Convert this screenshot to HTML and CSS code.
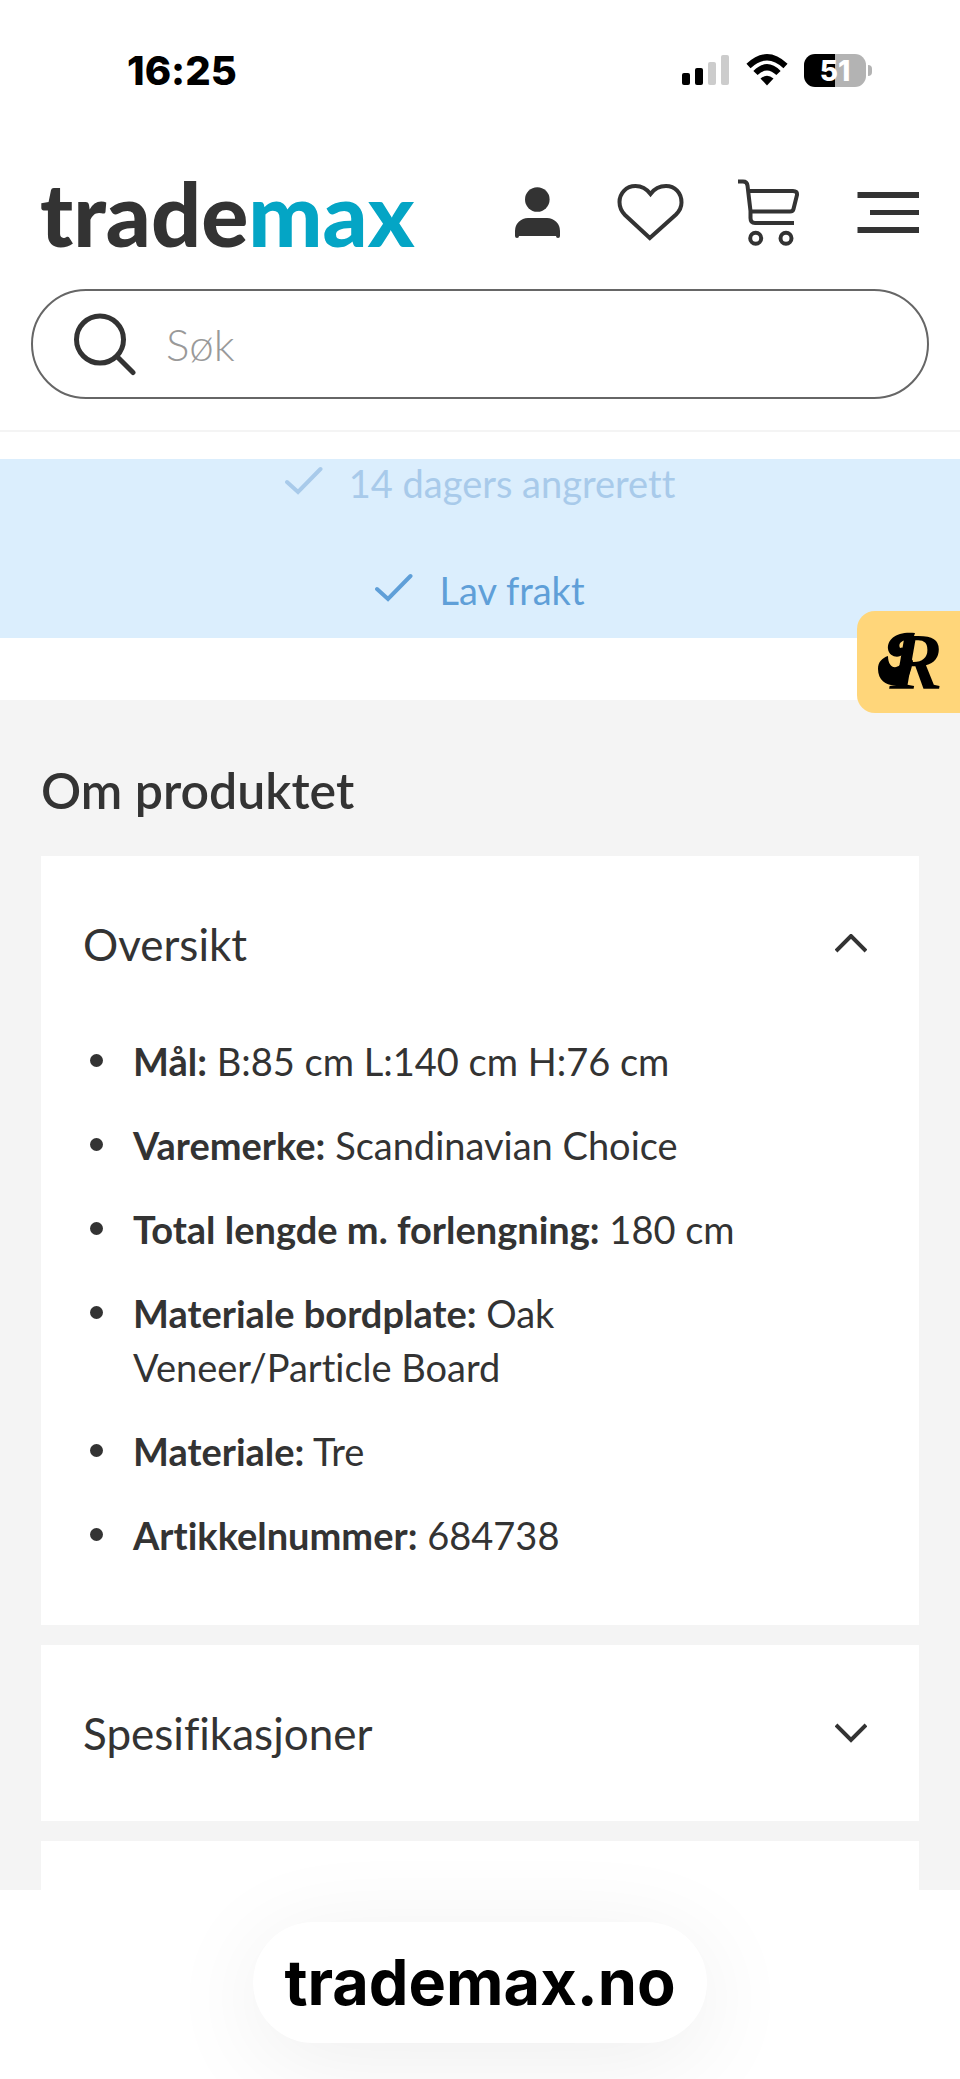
FILE: index.html
```html
<!DOCTYPE html>
<html lang="no">
<head>
  <meta charset="UTF-8" />
  <meta name="viewport" content="width=device-width, initial-scale=1.0"/>
  <title>Trademax</title>
  <link rel="stylesheet" href="styles.css">
</head>
<body>
  <div class="status-bar">
    <span class="time">16:25</span>
    <div class="status-icons">
      <svg width="48" height="34" viewBox="0 0 48 34">
        <rect x="0" y="20" width="8" height="12" rx="2"/>
        <rect x="13" y="15" width="8" height="17" rx="2"/>
        <rect x="26" y="9" width="8" height="23" rx="2" fill="#ccc"/>
        <rect x="39" y="2" width="8" height="30" rx="2" fill="#ccc"/>
      </svg>
      <svg width="42" height="34" viewBox="0 0 42 34">
        <path d="M2.500 13 Q21 -4.500 39.500 13" fill="none" stroke="#000" stroke-width="6"/>
        <path d="M9.500 20 Q21 8.500 32.500 20" fill="none" stroke="#000" stroke-width="6"/>
        <path d="M14.500 25.500 Q21 20 27.500 25.500 L21 32.500 Z"/>
      </svg>
      <div class="battery"><span>51</span></div>
    </div>
  </div>

  <header class="header">
    <div class="nav">
      <a class="logo" href="#">trade<span>max</span></a>
      <div class="nav-icons">
        <button aria-label="Min side">
          <svg viewBox="0 0 80 80">
            <circle cx="40.300" cy="26.500" r="12.300" fill="#333"/>
            <path d="M18 63 V58 a13 13 0 0 1 13-13 H50 a13 13 0 0 1 13 13 V63 a2 2 0 0 1-4 0 H22 a2 2 0 0 1-4 0Z" fill="#333"/>
          </svg>
        </button>
        <button aria-label="Favoritter">
          <svg viewBox="0 0 80 80">
            <path class="line" d="M36.500 21 C32 15 27 13 21.500 13 C12 13 5.500 20.500 5.500 29 C5.500 34 7.500 38.500 11 42 L35.800 65 L62 41.500 C65.500 38 67.500 34 67.500 29.500 C67.500 20 61 13 52 13 C46 13 40.500 15.500 36.500 21Z"/>
          </svg>
        </button>
        <button aria-label="Handlekurv">
          <svg viewBox="0 0 80 80">
            <path class="line" d="M7 8.500 H12 Q16 8.500 16.500 12.500 L19.500 38 V45 Q19.500 50 24 50 H63"/>
            <path class="line" d="M17 18 H62 Q66.500 18 66 22 L62.500 36 Q62 38.500 59 38.500 H20"/>
            <circle class="line" cx="24.700" cy="65.300" r="5.500"/>
            <circle class="line" cx="55" cy="65.300" r="5.500"/>
          </svg>
        </button>
        <button aria-label="Meny">
          <svg viewBox="0 0 80 80">
            <path d="M9.500 19h61.500v6H9.500zM22 37h49v5H22zM9.500 54h61.500v6H9.500z" fill="#333"/>
          </svg>
        </button>
      </div>
    </div>
    <form class="search">
      <svg width="64" height="64" viewBox="0 0 64 64">
        <circle cx="26" cy="27.500" r="23.500" fill="none" stroke="#333" stroke-width="5"/>
        <path d="M43.500 45 L59 60.500" stroke="#333" stroke-width="5" stroke-linecap="round"/>
      </svg>
      <input type="text" placeholder="Søk" aria-label="Søk">
    </form>
  </header>

  <div class="usp">
    <div class="usp-item fading">
      <svg width="38" height="34" viewBox="0 0 38 34"><path d="M2 16 L13 26 L35.500 3"/></svg>
      <span>14 dagers angrerett</span>
    </div>
    <div class="usp-item">
      <svg width="38" height="34" viewBox="0 0 38 34"><path d="M2 16 L13 26 L35.500 3"/></svg>
      <span>Lav frakt</span>
    </div>
    <a class="badge" href="#" aria-label="Rabatter">
      <!-- swash on the left of the initial -->
      <svg class="swash" viewBox="0 0 103 102">
        <path d="M58 22 C40 20 30 28 31 38 C32 46 42 48 46 43 C49 39 47 35 43 37 C40 31 48 28 56 28Z"/>
        <path d="M31 45 C31 55 37 59 43 54 C47 51 49 47 51 42 L56 50 C54 60 52 67 47 71 C38 78 21 74 21 58 C21 51 25 47 31 45Z"/>
      </svg>
      <span>R</span>
    </a>
  </div>

  <main class="product">
    <h2>Om produktet</h2>

    <section class="card">
      <button class="card-title" aria-expanded="true">
        Oversikt
        <svg width="32" height="20" viewBox="0 0 32 20"><path d="M1 17 L16 2 L31 17"/></svg>
      </button>
      <ul class="specs">
        <li><span><b>Mål:</b> B:85 cm L:140 cm H:76 cm</span></li>
        <li><span><b>Varemerke:</b> Scandinavian Choice</span></li>
        <li><span><b>Total lengde m. forlengning:</b> 180 cm</span></li>
        <li><span><b>Materiale bordplate:</b> Oak <span class="nowrap">Veneer/Particle Board</span></span></li>
        <li><span><b>Materiale:</b> Tre</span></li>
        <li><span><b>Artikkelnummer:</b> 684738</span></li>
      </ul>
    </section>

    <section class="card">
      <button class="card-title" aria-expanded="false">
        Spesifikasjoner
        <svg width="32" height="20" viewBox="0 0 32 20"><path d="M1 2 L16 17 L31 2"/></svg>
      </button>
    </section>

    <section class="card card-cut"></section>
  </main>

  <footer class="browser-bar">
    <a class="address" href="#">trademax.no</a>
  </footer>
</body>
</html>
```

FILE: styles.css
```css
* {
  box-sizing: border-box;
}
body {
  margin: 0;
  background: #fff;
  color: #333;
  font-family: Lato, "Open Sans", sans-serif;
  font-size: 38px;
}
body, button {
  font-variant-ligatures: none;
}
a {
  color: inherit;
  text-decoration: none;
}
button {
  padding: 0;
  border: none;
  background: none;
  color: inherit;
  font-family: inherit;
  cursor: pointer;
}
svg {
  display: block;
  flex-shrink: 0;
}

/* status bar */
.status-bar {
  display: flex;
  justify-content: space-between;
  align-items: center;
  height: 140px;
  padding: 0 94px 0 127px;
  color: #000;
  font-family: Inter, sans-serif;
  font-weight: 700;
}
.time {
  font-size: 40px;
  font-weight: 800;
}
.status-icons {
  display: flex;
  align-items: center;
  gap: 16px;
}
.battery {
  position: relative;
  width: 62px;
  height: 33px;
  border-radius: 11px;
  background: linear-gradient(to right, #000 50%, #b3b3b3 50%);
  color: #fff;
  font-size: 28px;
  font-weight: 800;
  line-height: 34px;
  text-align: center;
}
.battery::after {
  content: "";
  position: absolute;
  right: -6px;
  top: 11px;
  width: 4px;
  height: 11px;
  border-radius: 0 4px 4px 0;
  background: #b3b3b3;
}

/* header */
.header {
  padding: 33px 31px 31px;
  border-bottom: 2px solid #f4f4f4;
}
.nav {
  display: flex;
  justify-content: space-between;
  align-items: center;
  height: 80px;
  margin-bottom: 36px;
  padding: 0 1px 0 9px;
}
.logo {
  font-size: 88px;
  font-weight: 900;
  line-height: 76px;
}
.logo span {
  color: #04a5c5;
}
.nav-icons {
  display: flex;
  gap: 37px;
}
.nav-icons svg {
  width: 80px;
  height: 80px;
}
.line {
  fill: none;
  stroke: #333;
  stroke-width: 4;
}
.search {
  display: flex;
  align-items: center;
  gap: 28px;
  height: 110px;
  padding: 0 42px 0 41px;
  border: 2px solid #666;
  border-radius: 55px;
}
.search input {
  flex: 1;
  min-width: 0;
  padding: 0;
  border: none;
  outline: none;
  background: none;
  font-family: inherit;
  font-size: 44px;
  font-weight: 300;
}
.search input::placeholder {
  color: #999;
}

/* usp strip */
.usp {
  position: relative;
  display: flex;
  flex-direction: column;
  gap: 59px;
  margin: 27px 0 62px;
  padding-bottom: 24px;
  background: #dbeefd;
  color: #5f9fd8;
}
.usp-item {
  display: flex;
  justify-content: center;
  align-items: center;
  gap: 26px;
  line-height: 48px;
}
.usp-item path {
  fill: none;
  stroke: currentColor;
  stroke-width: 4;
  stroke-linecap: round;
}
.usp-item.fading {
  color: #a8caea;
}
.badge {
  position: absolute;
  right: 0;
  bottom: -75px;
  width: 103px;
  height: 102px;
  padding-left: 15px;
  border-radius: 18px 0 0 18px;
  background: #ffd67a;
  color: #000;
  font-family: "Liberation Serif", serif;
  font-size: 80px;
  font-style: italic;
  font-weight: 700;
  line-height: 102px;
  text-align: center;
}
.swash {
  position: absolute;
  inset: 0;
}

/* product info */
.product {
  padding: 60px 41px 0;
  background: #f4f4f4;
}
.product h2 {
  margin: 0 0 36px;
  font-size: 50px;
  font-weight: 600;
  line-height: 60px;
}
.card {
  margin-bottom: 20px;
  background: #fff;
}
.card-title {
  display: flex;
  justify-content: space-between;
  align-items: center;
  width: 100%;
  height: 176px;
  padding: 0 52px 0 42px;
  font-size: 44px;
}
.card-title path {
  fill: none;
  stroke: #333;
  stroke-width: 4;
}
.specs {
  display: flex;
  flex-direction: column;
  gap: 30px;
  margin: 0;
  padding: 2px 42px 63px;
  list-style: none;
  line-height: 54px;
}
.specs li {
  display: flex;
}
.specs li::before {
  content: "";
  flex-shrink: 0;
  width: 13px;
  height: 13px;
  margin: 20px 30px 0 7px;
  border-radius: 50%;
  background: #333;
}
.nowrap {
  white-space: nowrap;
}
.card-cut {
  height: 49px;
  margin-bottom: 0;
}

/* browser address pill */
.browser-bar {
  display: flex;
  justify-content: center;
  padding: 32px 0 36px;
}
.address {
  padding: 0 31px;
  border-radius: 61px;
  background: #fff;
  box-shadow: 0 16px 100px rgba(0, 0, 0, 0.07);
  color: #000;
  font-family: Inter, sans-serif;
  font-size: 63px;
  font-weight: 700;
  line-height: 121px;
}
```
